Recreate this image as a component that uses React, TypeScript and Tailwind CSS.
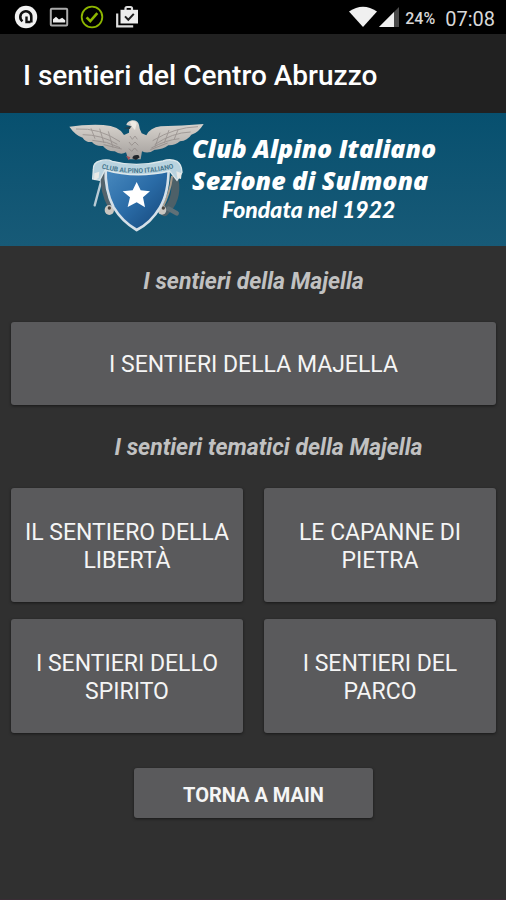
import React from 'react';

const themedTrails = [
  'Il sentiero della libertà',
  'Le capanne di pietra',
  'I sentieri dello spirito',
  'I sentieri del parco'
];

const buttonBase =
  'rounded-[3px] bg-[#5a5a5c] uppercase text-[#f5f5f5] shadow-[0_1px_3px_rgba(0,0,0,0.5)]';

function StatusBar() {
  return (
    <div className="flex h-[34px] items-center justify-between bg-black pl-[14px] pr-[11px] text-[#d8d8d8]">
      <div className="flex items-center gap-[11px]">
        <svg className="h-6 w-6" viewBox="0 0 24 24" fill="none">
          <circle cx="12" cy="12" r="11.2" fill="#f2f2f2" />
          <path d="M8.5 16.2A5.5 5.5 0 1 1 17.3 12v5.500" stroke="#111" strokeWidth="2.6" />
          <path d="M12.500 11.500v5.500h4" stroke="#111" strokeWidth="2.4" />
        </svg>
        <svg className="h-5 w-5" viewBox="0 0 20 20" fill="none">
          <rect x="1.8" y="1.8" width="16.4" height="16.6" rx="1" stroke="#aaa" strokeWidth="2" />
          <path d="M4 15.5v-3.2l3-2.5 3 2.8 3.2-1.8 3 2.5v2.2z" fill="#eee" />
        </svg>
        <svg className="h-6 w-6" viewBox="0 0 24 24" fill="none" stroke="#8db600">
          <circle cx="12" cy="12" r="10.3" strokeWidth="1.8" />
          <path d="m6.6 12.4 3.7 3.8 7-8" strokeWidth="2.6" />
        </svg>
        <svg className="h-6 w-6" viewBox="0 0 24 24" fill="none">
          <path d="M2.2 8.5v12.8h16" stroke="#ddd" strokeWidth="2.2" />
          <path d="M10.5 6V3.6Q10.5 2 12 2h3.5Q17 2 17 3.6V6" stroke="#ddd" strokeWidth="2.2" />
          <path d="M5.5 4.8H23v13.7H5.5z" fill="#eee" />
          <path d="m10 11.4 3.3 3.3 5.5-5.8" stroke="#222" strokeWidth="2" />
        </svg>
      </div>
      <div className="flex items-center">
        <svg className="h-6 w-[52px]" viewBox="0 0 52 24">
          <path d="M0 6.5Q14-3 28 6.5L14 22z" fill="#f0f0f0" />
          <path d="M50 2v20H30z" fill="#4a4a4a" />
          <path d="M45 7v15H30z" fill="#f0f0f0" />
        </svg>
        <span className="ml-1 pt-1 text-base font-medium">24%</span>
        <span className="ml-[10px] pt-[3px] text-xl">07:08</span>
      </div>
    </div>
  );
}

function ClubEmblem() {
  return (
    <svg className="h-[118px] w-[140px] shrink-0" viewBox="24 24 420 354">
      <defs>
        <linearGradient id="shield" x1="0" y1="0" x2="1" y2="1">
          <stop offset="0" stopColor="#4a8bc0" />
          <stop offset="0.5" stopColor="#2a6ba6" />
          <stop offset="1" stopColor="#134477" />
        </linearGradient>
        <linearGradient id="wing" x1="0" y1="0" x2="0" y2="1">
          <stop offset="0" stopColor="#dcd8d2" />
          <stop offset="1" stopColor="#a39e9b" />
        </linearGradient>
      </defs>
      {/* tools behind the shield */}
      <g stroke="#8b8f92" strokeLinecap="round" fill="none">
        <path d="M124 212 104 286" strokeWidth="7" stroke="#b9cbd5" />
        <path d="M130 190q-8 50 22 104" strokeWidth="12" stroke="#54636b" />
        <path d="M344 210q10 60-30 96" strokeWidth="24" stroke="#4d6068" />
        <path d="M336 200q-6 50-30 96" strokeWidth="6" stroke="#a99c8c" />
        <path d="M326 296 350 310" strokeWidth="14" stroke="#5f7077" />
      </g>
      <g fill="#c9c6c0">
        <ellipse cx="148" cy="300" rx="14" ry="15" />
        <ellipse cx="306" cy="300" rx="13" ry="14" />
        <circle cx="148" cy="294" r="5" fill="#4a4640" />
        <circle cx="310" cy="294" r="5" fill="#4a4640" />
      </g>
      {/* eagle */}
      <path
        d="M28 50Q75 43 130 45Q178 48 192 75L207 68Q206 55 212 48L199 45Q201 34 216 31Q234 30 237 45Q238 58 245 70L259 76Q270 53 302 49Q365 47 431 42Q414 70 394 74Q383 91 360 94Q345 107 325 106Q306 120 284 119Q266 133 246 124L242 148H205L198 127Q182 137 164 124Q142 125 129 108Q107 110 96 96Q77 98 68 83Q47 77 28 50Z"
        fill="url(#wing)"
      />
      <g stroke="#877f7d" strokeWidth="3" fill="none" opacity="0.6">
        <path d="M48 57q70-4 132 38M68 74q56 0 104 29M97 91q44 2 83 22M131 104l54 13" />
        <path d="M414 50q-70 2-136 42M392 66q-56 2-108 38M358 86q-40 4-84 28M323 99l-52 20" />
        <path d="M93 55l12 31M119 56l13 43M145 64l14 49M355 57l-12 30M327 60l-14 39M300 68l-15 42" />
        <path d="M210 78l7 10 8-10 7 10M207 96l8 10 10-10 10 10M207 116l8 8 9-10 9 10" />
      </g>
      <path d="M210 36q11-8 20 4l-5 20-9-10z" fill="#eeebe4" />
      <path d="M191 55 215 48 209 57z" fill="#273d48" />
      <path d="M217 145q1-12 18-10l4 7-11 8z" fill="#20252a" />
      <path d="M198 137l13 5-5 9z" fill="#a55358" />
      {/* shield with its star */}
      <path
        d="M137 171Q229 197 326 171Q326 250 300 292Q273 338 230 360Q186 334 161 292Q134 242 137 171Z"
        fill="url(#shield)"
        stroke="#d5e0e8"
        strokeWidth="8"
      />
      <path
        d="m230 216 12 25 28 3-21 18 6 30-25-15-27 14 7-29-22-18 30-3z"
        fill="#fff"
      />
      {/* ribbon */}
      <path
        d="M100 179Q99 158 119 153Q140 146 157 154Q230 173 309 153Q331 145 351 154Q365 163 366 187L351 211L329 183Q227 207 135 180L119 211L98 207Z"
        fill="#b9d3df"
        stroke="#dce7eb"
        strokeWidth="4"
      />
      <path id="ribbon-line" d="M104 170Q229 208 362 169" fill="none" />
      <text fill="#47788f" fontSize="20" fontWeight="700">
        <textPath href="#ribbon-line" startOffset="50%" textAnchor="middle">
          CLUB ALPINO ITALIANO
        </textPath>
      </text>
      <path d="M103 190l15-5-2 19-14 7zM365 190l-16-6 3 20 11 3z" fill="#e8e9e6" />
    </svg>
  );
}

function ClubBanner() {
  return (
    <div className="flex h-[133px] items-start bg-linear-to-b from-[#07506f] to-[#175a77] pl-[68px] pt-[5px]">
      <ClubEmblem />
      <div className="-ml-4 flex flex-col pt-[14px] font-['Open_Sans'] text-[25px] font-extrabold italic leading-8 text-white">
        <span>Club Alpino Italiano</span>
        <span>Sezione di Sulmona</span>
        <span className="pl-[30px] font-['Lato'] text-[23px] font-black leading-[26px]">Fondata nel 1922</span>
      </div>
    </div>
  );
}

export default function App() {
  return (
    <div className="flex min-h-screen flex-col border-b border-[#3a2c35] bg-[#303030] font-['Roboto',sans-serif]">
      <StatusBar />
      <header className="flex h-[79px] items-center bg-[#212121] px-[23px] pt-1">
        <h1 className="text-[28px] font-medium text-white">I sentieri del Centro Abruzzo</h1>
      </header>
      <ClubBanner />
      <main className="flex flex-col pl-[11px] pr-[10px]">
        <h2 className="pb-[22px] pt-[18px] text-center text-[23px] font-bold italic leading-9 text-[#c1c1c1]">
          I sentieri della Majella
        </h2>
        <button type="button" className={`${buttonBase} h-[83px] pt-1 text-[23px]`}>
          I sentieri della Majella
        </button>
        <h2 className="pb-[22px] pl-[30px] pt-[25px] text-center text-[23px] font-bold italic leading-9 text-[#c1c1c1]">
          I sentieri tematici della Majella
        </h2>
        <div className="grid grid-cols-2 gap-x-[21px] gap-y-[17px]">
          {themedTrails.map((trail) => (
            <button key={trail} type="button" className={`${buttonBase} h-[114px] px-2 pt-1 text-[23px] leading-7`}>
              {trail}
            </button>
          ))}
        </div>
        <button
          type="button"
          className={`${buttonBase} mt-[35px] h-[50px] self-center px-[49px] pt-1 text-xl font-bold`}
        >
          Torna a main
        </button>
      </main>
    </div>
  );
}
